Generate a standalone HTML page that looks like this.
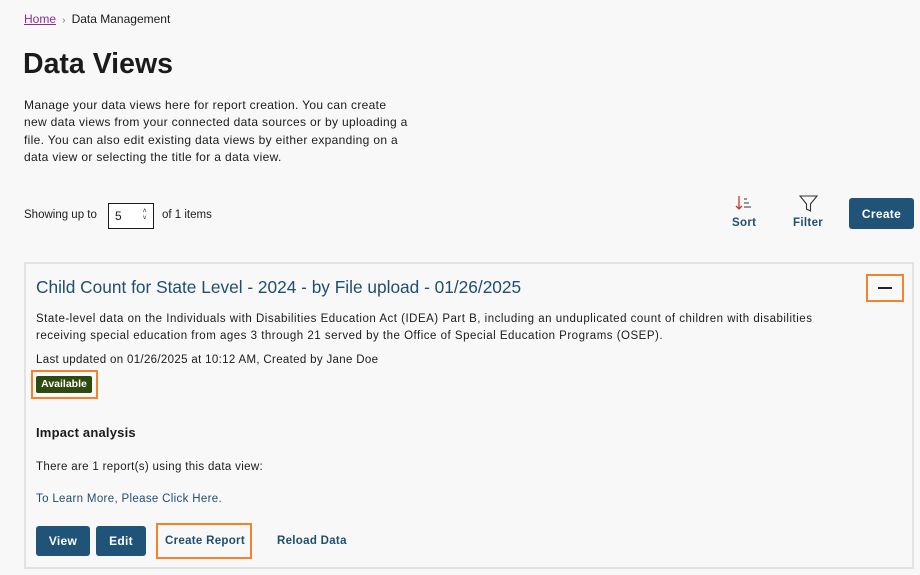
<!DOCTYPE html>
<html><head><style>
*{margin:0;padding:0;box-sizing:border-box}
body{width:920px;height:575px;background:#f8f8f8;font-family:"Liberation Sans",sans-serif;color:#1b1b1b;position:relative;overflow:hidden}
.a{position:absolute;white-space:nowrap;letter-spacing:0.33px}
.btn{position:absolute;background:#1f5378;color:#fff;font-weight:bold;font-size:12px;border-radius:3px;display:flex;align-items:center;justify-content:center;letter-spacing:0.3px}
.or{position:absolute;border:2px solid #f7822a}
</style></head><body>
<div class="a" style="left:24px;top:12px;font-size:12px;letter-spacing:0"><span style="color:#8b2f8e;text-decoration:underline">Home</span> <span style="color:#777;font-size:10px">&nbsp;›&nbsp;</span> Data Management</div>
<div class="a" style="left:23px;top:48px;font-size:28.5px;font-weight:bold;letter-spacing:0">Data Views</div>
<div class="a" style="left:24px;top:97px;font-size:12px;line-height:17.3px">Manage your data views here for report creation. You can create<br>new data views from your connected data sources or by uploading a<br>file. You can also edit existing data views by either expanding on a<br>data view or selecting the title for a data view.</div>
<div class="a" style="left:24px;top:209px;font-size:11.5px;letter-spacing:0">Showing up to</div>
<div class="a" style="left:108px;top:203px;width:46px;height:26px;border:1px solid #1b1b1b;background:#fff;font-size:12px;padding:5px 0 0 6px">5<span style="position:absolute;right:6px;top:4px;font-size:7px;line-height:7px">˄<br>˅</span></div>
<div class="a" style="left:162px;top:209px;font-size:11.5px;letter-spacing:0">of 1 items</div>
<svg class="a" style="left:735px;top:195px" width="20" height="18" viewBox="0 0 20 18"><path d="M4 1v13M1 11l3 3 3-3" stroke="#c0392b" stroke-width="1.3" fill="none"/><path d="M9 4h3M9 8h5M9 12h7" stroke="#333" stroke-width="1.1"/></svg>
<div class="a" style="left:732px;top:217px;font-size:11.5px;font-weight:bold;color:#1f4e6e">Sort</div>
<svg class="a" style="left:799px;top:195px" width="20" height="18" viewBox="0 0 20 18"><path d="M1 1h17l-6.5 8v7l-4-2V9z" stroke="#333" stroke-width="1.1" fill="none"/></svg>
<div class="a" style="left:793px;top:217px;font-size:11.5px;font-weight:bold;color:#1f4e6e">Filter</div>
<div class="btn" style="left:849px;top:198px;width:65px;height:31px">Create</div>
<div class="a" style="left:24px;top:262px;width:890px;height:307px;border:2px solid #e2e2e2"></div>
<div class="a" style="left:36px;top:277px;font-size:17.3px;color:#1f4e6e;letter-spacing:0">Child Count for State Level - 2024 - by File upload - 01/26/2025</div>
<div class="or" style="left:866px;top:274px;width:38px;height:28px"></div>
<div class="a" style="left:878px;top:287px;width:14px;height:2px;background:#222"></div>
<div class="a" style="left:36px;top:311px;font-size:11.5px;line-height:17px;letter-spacing:0.5px">State-level data on the Individuals with Disabilities Education Act (IDEA) Part B, including an unduplicated count of children with disabilities<br>receiving special education from ages 3 through 21 served by the Office of Special Education Programs (OSEP).</div>
<div class="a" style="left:36px;top:354px;font-size:11.5px">Last updated on 01/26/2025 at 10:12 AM, Created by Jane Doe</div>
<div class="or" style="left:31px;top:370px;width:67px;height:29px"></div>
<div class="a" style="left:36px;top:376px;width:56px;height:17px;background:#2e4a0e;border-radius:2px;color:#fff;font-size:10.5px;font-weight:bold;text-align:center;line-height:17px;letter-spacing:0">Available</div>
<div class="a" style="left:36px;top:425px;font-size:13px;font-weight:bold;letter-spacing:0.2px">Impact analysis</div>
<div class="a" style="left:36px;top:461px;font-size:11.5px">There are 1 report(s) using this data view:</div>
<div class="a" style="left:36px;top:493px;font-size:11.5px;color:#1f4e6e">To Learn More, Please Click Here.</div>
<div class="btn" style="left:36px;top:526px;width:54px;height:30px">View</div>
<div class="btn" style="left:96px;top:526px;width:50px;height:30px">Edit</div>
<div class="or" style="left:156px;top:523px;width:96px;height:36px"></div>
<div class="a" style="left:165px;top:535px;font-size:11.5px;font-weight:bold;color:#1f4e6e;letter-spacing:0.3px">Create Report</div>
<div class="a" style="left:277px;top:535px;font-size:11.5px;font-weight:bold;color:#1f4e6e;letter-spacing:0.3px">Reload Data</div>
</body></html>
